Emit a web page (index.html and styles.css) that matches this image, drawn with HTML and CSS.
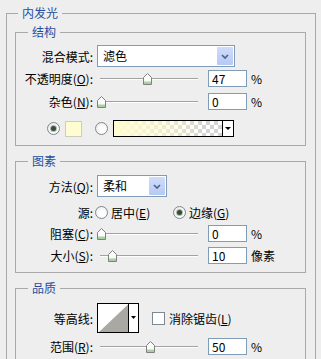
FILE: index.html
```html
<!DOCTYPE html>
<html lang="zh-CN">
<head>
<meta charset="utf-8">
<title>内发光</title>
<link rel="stylesheet" href="styles.css">
</head>
<body>
<fieldset class="group outer">
  <legend>内发光</legend>

  <fieldset class="group sub sub-struct">
    <legend>结构</legend>
    <div class="row row-select">
      <span class="label">混合模式:</span>
      <div class="select select-wide">
        <span class="select-text">滤色</span>
        <span class="select-btn"><svg width="8" height="5" viewBox="0 0 8 5"><path d="M1 1L4 4L7 1" fill="none" stroke="#4b5f86" stroke-width="1.6"/></svg></span>
      </div>
    </div>
    <div class="row row-field mt3">
      <span class="label">不透明度(<u>O</u>):</span>
      <div class="slider"><span class="track"></span><svg class="thumb" style="left:46px" width="9" height="12" viewBox="0 0 9 12"><path d="M0.5 11.5V4.5L4.5 0.5L8.5 4.5V11.5Z" fill="#fbfbfb" stroke="#808080"/><path d="M1 8.5H8V11H1Z" fill="#a7d2a0"/></svg></div>
      <span class="field">47</span><span class="unit">%</span>
    </div>
    <div class="row row-field mt6">
      <span class="label">杂色(<u>N</u>):</span>
      <div class="slider"><span class="track"></span><svg class="thumb" style="left:0px" width="9" height="12" viewBox="0 0 9 12"><path d="M0.5 11.5V4.5L4.5 0.5L8.5 4.5V11.5Z" fill="#fbfbfb" stroke="#808080"/><path d="M1 8.5H8V11H1Z" fill="#a7d2a0"/></svg></div>
      <span class="field">0</span><span class="unit">%</span>
    </div>
    <div class="row color-row mt10">
      <span class="radio on"></span>
      <span class="swatch"></span>
      <span class="radio radio-gap"></span>
      <div class="gradient">
        <span class="gradient-fill"></span>
        <span class="gradient-btn"><span class="tri"></span></span>
      </div>
    </div>
  </fieldset>

  <fieldset class="group sub sub-pattern">
    <legend>图素</legend>
    <div class="row row-select">
      <span class="label">方法(<u>Q</u>):</span>
      <div class="select select-narrow">
        <span class="select-text">柔和</span>
        <span class="select-btn"><svg width="8" height="5" viewBox="0 0 8 5"><path d="M1 1L4 4L7 1" fill="none" stroke="#4b5f86" stroke-width="1.6"/></svg></span>
      </div>
    </div>
    <div class="row row-field mt7">
      <span class="label">源:</span>
      <span class="radio radio-first"></span><span class="opt opt-first">居中(<u>E</u>)</span>
      <span class="radio on"></span><span class="opt">边缘(<u>G</u>)</span>
    </div>
    <div class="row row-field mt4">
      <span class="label">阻塞(<u>C</u>):</span>
      <div class="slider"><span class="track"></span><svg class="thumb" style="left:0px" width="9" height="12" viewBox="0 0 9 12"><path d="M0.5 11.5V4.5L4.5 0.5L8.5 4.5V11.5Z" fill="#fbfbfb" stroke="#808080"/><path d="M1 8.5H8V11H1Z" fill="#a7d2a0"/></svg></div>
      <span class="field">0</span><span class="unit">%</span>
    </div>
    <div class="row row-field mt5">
      <span class="label">大小(<u>S</u>):</span>
      <div class="slider"><span class="track"></span><svg class="thumb" style="left:11px" width="9" height="12" viewBox="0 0 9 12"><path d="M0.5 11.5V4.5L4.5 0.5L8.5 4.5V11.5Z" fill="#fbfbfb" stroke="#808080"/><path d="M1 8.5H8V11H1Z" fill="#a7d2a0"/></svg></div>
      <span class="field">10</span><span class="unit">像素</span>
    </div>
  </fieldset>

  <fieldset class="group sub sub-quality">
    <legend>品质</legend>
    <div class="row row-contour">
      <span class="label">等高线:</span>
      <svg class="contour" width="42" height="30" viewBox="0 0 42 30"><rect x="0.5" y="0.5" width="41" height="29" fill="#fff" stroke="#000"/><path d="M2 29L31 1.5V29Z" fill="#a9a8a2"/><path d="M31.5 0V30" stroke="#000"/><path d="M34 13H39L36.5 16Z" fill="#000"/></svg>
      <span class="checkbox"></span><span class="opt">消除锯齿(<u>L</u>)</span>
    </div>
    <div class="row row-field mt5">
      <span class="label">范围(<u>R</u>):</span>
      <div class="slider"><span class="track"></span><svg class="thumb" style="left:49px" width="9" height="12" viewBox="0 0 9 12"><path d="M0.5 11.5V4.5L4.5 0.5L8.5 4.5V11.5Z" fill="#fbfbfb" stroke="#808080"/><path d="M1 8.5H8V11H1Z" fill="#a7d2a0"/></svg></div>
      <span class="field">50</span><span class="unit">%</span>
    </div>
  </fieldset>
</fieldset>
</body>
</html>
```

FILE: styles.css
```css
* { box-sizing: border-box; }

html, body {
  margin: 0;
  padding: 0;
  background: #eeeeee;
}

body {
  width: 321px;
  height: 359px;
  overflow: hidden;
  font-family: "Noto Sans CJK SC", "Noto Sans", sans-serif;
  font-size: 12px;
  line-height: 17px;
  color: #000;
}

u { text-decoration: underline; text-underline-offset: 1px; }

.group {
  border: 1px solid #a9a9a9;
  margin: 0;
  min-width: 0;
}

.group > legend {
  font-size: 12px;
  line-height: 18px;
  color: #1f4f9e;
  padding: 0 4px;
}

.outer {
  margin: 4px 0 0 6px;
  width: 310px;
  padding: 1px 9px 30px 8px;
}

.outer > legend { margin-left: 3px; }

.sub > legend { margin-left: 12px; }

.sub-struct { padding: 4px 0 8px 0; }
.sub-pattern { margin-top: 6px; padding: 5px 0 8px 0; }
.sub-quality { margin-top: 6px; padding: 6px 0 10px 0; }

.row {
  display: flex;
  align-items: center;
}

.mt3 { margin-top: 3px; }
.mt4 { margin-top: 4px; }
.mt5 { margin-top: 5px; }
.mt6 { margin-top: 6px; }
.mt7 { margin-top: 7px; }
.mt10 { margin-top: 10px; }

.row-select { height: 22px; }
.row-field { height: 17px; }
.row-contour { height: 30px; }

.label {
  flex: none;
  width: 77px;
  margin-right: 4px;
  text-align: right;
  white-space: nowrap;
}

/* dropdown */
.select {
  display: flex;
  height: 22px;
  border: 1px solid #7f9db9;
  background: #fff;
  padding: 1px;
}
.select-wide { width: 138px; }
.select-narrow { width: 70px; }

.select-text {
  flex: 1;
  padding-left: 4px;
  line-height: 18px;
}

.select-btn {
  flex: none;
  width: 16px;
  display: flex;
  align-items: center;
  justify-content: center;
  background: linear-gradient(#d0dcfb, #b6c9f4);
  border-radius: 1px;
}

/* slider */
.slider {
  position: relative;
  flex: none;
  width: 104px;
  height: 17px;
  padding: 8px 3px 0;
}

.track {
  display: block;
  height: 2px;
  background: #a2a2a2;
  border-bottom: 1px solid #fdfdfd;
}

.thumb {
  position: absolute;
  top: 3px;
}

/* numeric field */
.field {
  flex: none;
  width: 39px;
  height: 17px;
  margin-left: 7px;
  border: 1px solid #7f9db9;
  background: #fff;
  padding-left: 3px;
  line-height: 15px;
}

.unit { margin-left: 4px; }

/* colour row */
.color-row {
  height: 17px;
  padding-left: 31px;
}

.radio {
  flex: none;
  width: 13px;
  height: 13px;
  border-radius: 50%;
  border: 1px solid #7d8893;
  background: radial-gradient(circle at 60% 60%, #ffffff 30%, #e2e2e2);
  display: flex;
  align-items: center;
  justify-content: center;
}

.radio.on::after {
  content: "";
  width: 5px;
  height: 5px;
  border-radius: 50%;
  background: #3b4a3b;
  box-shadow: 0 0 0 1px #a9bea9;
}

.swatch {
  flex: none;
  width: 17px;
  height: 16px;
  margin-left: 5px;
  border: 1px solid #cfcdb8;
  background: #fffcd2;
}

.radio-gap { margin-left: 13px; }

.gradient {
  flex: none;
  display: flex;
  width: 121px;
  height: 17px;
  margin-left: 5px;
  border: 1px solid #000;
}

.gradient-fill {
  flex: 1;
  background:
    linear-gradient(to right, #fffcd0 0%, rgba(255, 252, 208, 0.6) 45%, rgba(255, 252, 208, 0) 85%),
    repeating-conic-gradient(#d4d4d4 0 25%, #ffffff 0 50%) 0 0 / 8px 8px;
}

.gradient-btn {
  flex: none;
  width: 11px;
  border-left: 1px solid #000;
  background: #fff;
  display: flex;
  align-items: center;
  justify-content: center;
}

.tri {
  width: 0;
  height: 0;
  border-left: 3px solid transparent;
  border-right: 3px solid transparent;
  border-top: 3px solid #000;
}

/* source options */
.radio-first { margin-left: -2px; }

.opt {
  margin-left: 3px;
  white-space: nowrap;
}
.opt-first { width: 62px; }

/* quality */
.contour { flex: none; display: block; }

.checkbox {
  flex: none;
  width: 13px;
  height: 13px;
  margin-left: 13px;
  border: 1px solid #7d8893;
  background: #fff;
}
.checkbox + .opt { margin-left: 4px; }
```
